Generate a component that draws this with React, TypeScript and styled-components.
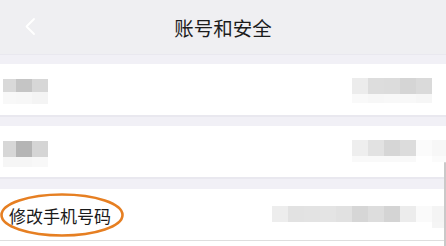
import React from 'react';
import styled, { createGlobalStyle } from 'styled-components';

const GlobalStyle = createGlobalStyle`
  html, body {
    margin: 0;
    padding: 0;
    background: #ffffff;
  }
  body {
    font-family: "Noto Sans CJK SC", "Noto Sans", sans-serif;
  }
`;

const Page = styled.div`
  position: relative;
  width: 446px;
  height: 246px;
  overflow: hidden;
  background: #ffffff;
`;

const NavBar = styled.header`
  position: relative;
  height: 54px;
  display: flex;
  align-items: center;
  justify-content: center;
  background: #efeff2;
`;

const BackButton = styled.div`
  position: absolute;
  left: 24px;
  top: 17px;
  width: 14px;
  height: 20px;
`;

const Title = styled.h1`
  margin: 0;
  font-size: 19.5px;
  font-weight: 400;
  color: #1c1c1c;
`;

const Gap = styled.div<{ $h: number }>`
  height: ${(p) => p.$h}px;
  background: #f1f0f6;
  border-top: 1px solid #e9e8ef;
  box-sizing: border-box;
`;

const Row = styled.div<{ $last?: boolean }>`
  position: relative;
  height: 52px;
  display: flex;
  align-items: center;
  justify-content: space-between;
  padding-left: 3px;
  box-sizing: border-box;
  background: #ffffff;
  border-bottom: 1px solid ${(p) => (p.$last ? '#dedede' : '#e9e8ef')};
`;

const Label = styled.span`
  padding-left: 6px;
  font-size: 17px;
  color: #1a1a1a;
  line-height: 1;
  margin-top: 2px;
`;

const Mosaic = styled.div<{ $cols: string; $offset: number; $right: number }>`
  display: grid;
  grid-template-columns: ${(p) => p.$cols};
  margin-top: ${(p) => p.$offset}px;
  margin-right: ${(p) => p.$right}px;
`;

const Cell = styled.div<{ $c: string; $h: number }>`
  height: ${(p) => p.$h}px;
  background: ${(p) => p.$c};
`;

const Ring = styled.svg`
  position: absolute;
  left: 0;
  top: 4px;
  pointer-events: none;
`;

const ScrollThumb = styled.div`
  position: absolute;
  right: 0;
  top: 162px;
  width: 2px;
  height: 90px;
  border-radius: 1px;
  background: #c9c9c9;
`;

type Block = { cols: string; rows: { h: number; colors: string[] }[] };

const blocks: Record<string, Block> = {
  r1l: {
    cols: '13px 16px 16px',
    rows: [
      { h: 13, colors: ['#d9d9d9', '#c5c5c5', '#d7d7d7'] },
      { h: 12, colors: ['#f8f8f8', '#f7f7f7', '#f4f4f4'] },
    ],
  },
  r1r: {
    cols: 'repeat(5, 16px)',
    rows: [
      { h: 16, colors: ['#ececec', '#dddddd', '#dcdcdc', '#d5d5d5', '#dadada'] },
      { h: 9, colors: ['#f9f9f9', '#f7f7f7', '#f8f8f8', '#f8f8f8', '#f6f6f6'] },
    ],
  },
  r2l: {
    cols: '13px 16px 16px',
    rows: [
      { h: 16, colors: ['#d7d7d7', '#b5b5b5', '#d5d5d5'] },
      { h: 10, colors: ['#f6f6f6', '#f6f6f6', '#f8f8f8'] },
    ],
  },
  r2r: {
    cols: 'repeat(6, 16px)',
    rows: [
      { h: 16, colors: ['#eeeeee', '#e2e2e2', '#d6d6d6', '#dcdcdc', '#fbfbfb', '#f7f7f7'] },
      { h: 6, colors: ['#f9f9f9', '#f9f9f9', '#f9f9f9', '#f9f9f9', '#ffffff', '#fbfbfb'] },
    ],
  },
  r3r: {
    cols: 'repeat(11, 16px)',
    rows: [
      {
        h: 16,
        colors: [
          '#ededed', '#e2e2e2', '#e3e3e3', '#e4e4e4', '#e1e1e1', '#d6d6d6',
          '#dddddd', '#d4d4d4', '#ececec', '#fafafa', '#f4f4f4',
        ],
      },
      {
        h: 6,
        colors: [
          '#ffffff', '#ffffff', '#ffffff', '#ffffff', '#ffffff', '#ffffff',
          '#ffffff', '#ffffff', '#ffffff', '#ffffff', '#f5f5f5',
        ],
      },
    ],
  },
};

const Pixelated = ({ id, offset, right }: { id: string; offset: number; right: number }) => {
  const b = blocks[id];
  return (
    <Mosaic $cols={b.cols} $offset={offset} $right={right}>
      {b.rows.map((r, ri) =>
        r.colors.map((c, ci) => <Cell key={`${ri}-${ci}`} $c={c} $h={r.h} />)
      )}
    </Mosaic>
  );
};

const App = () => {
  return (
    <Page>
      <GlobalStyle />
      <NavBar>
        <BackButton>
          <svg width="14" height="20" viewBox="0 0 14 20">
            <path d="M10 2 L2.5 9.5 L10 17" fill="none" stroke="#ffffff" strokeWidth="1.8" strokeLinecap="round" strokeLinejoin="round" />
          </svg>
        </BackButton>
        <Title>账号和安全</Title>
      </NavBar>
      <Gap $h={10} />
      <Row>
        <Pixelated id="r1l" offset={4} right={0} />
        <Pixelated id="r1r" offset={2} right={14} />
      </Row>
      <Gap $h={10} />
      <Row>
        <Pixelated id="r2l" offset={4} right={0} />
        <Pixelated id="r2r" offset={-1} right={-2} />
      </Row>
      <Gap $h={11} />
      <Row $last>
        <Label>修改手机号码</Label>
        <Pixelated id="r3r" offset={4} right={-2} />
        <Ring width="126" height="44" viewBox="0 0 126 44">
          <ellipse cx="62" cy="22" rx="60.5" ry="20.5" fill="none" stroke="#e67f22" strokeWidth="2.6" />
        </Ring>
      </Row>
      <ScrollThumb />
    </Page>
  );
};

export default App;
